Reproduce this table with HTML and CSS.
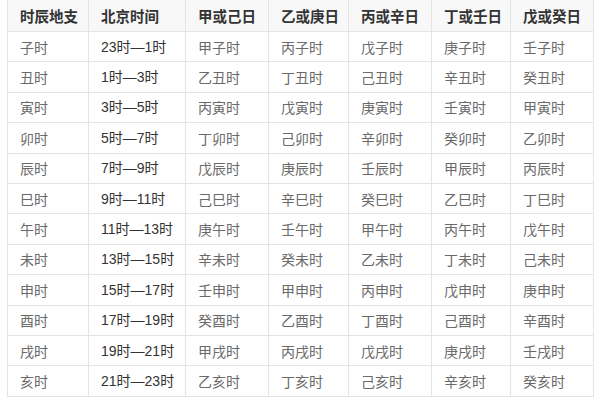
FILE: index.html
```html
<!DOCTYPE html>
<html lang="zh">
<head>
<meta charset="utf-8">
<link rel="stylesheet" href="styles.css">
</head>
<body>
<table class="shichen">
<colgroup>
<col class="c1"><col class="c2"><col class="c3"><col class="c4"><col class="c5"><col class="c6"><col class="c7">
</colgroup>
<thead>
<tr><th>时辰地支</th><th>北京时间</th><th>甲或己日</th><th>乙或庚日</th><th>丙或辛日</th><th>丁或壬日</th><th>戊或癸日</th></tr>
</thead>
<tbody>
<tr><td>子时</td><td class="num">23时—1时</td><td>甲子时</td><td>丙子时</td><td>戊子时</td><td>庚子时</td><td>壬子时</td></tr>
<tr><td>丑时</td><td class="num">1时—3时</td><td>乙丑时</td><td>丁丑时</td><td>己丑时</td><td>辛丑时</td><td>癸丑时</td></tr>
<tr><td>寅时</td><td class="num">3时—5时</td><td>丙寅时</td><td>戊寅时</td><td>庚寅时</td><td>壬寅时</td><td>甲寅时</td></tr>
<tr><td>卯时</td><td class="num">5时—7时</td><td>丁卯时</td><td>己卯时</td><td>辛卯时</td><td>癸卯时</td><td>乙卯时</td></tr>
<tr><td>辰时</td><td class="num">7时—9时</td><td>戊辰时</td><td>庚辰时</td><td>壬辰时</td><td>甲辰时</td><td>丙辰时</td></tr>
<tr><td>巳时</td><td class="num">9时—11时</td><td>己巳时</td><td>辛巳时</td><td>癸巳时</td><td>乙巳时</td><td>丁巳时</td></tr>
<tr><td>午时</td><td class="num">11时—13时</td><td>庚午时</td><td>壬午时</td><td>甲午时</td><td>丙午时</td><td>戊午时</td></tr>
<tr><td>未时</td><td class="num">13时—15时</td><td>辛未时</td><td>癸未时</td><td>乙未时</td><td>丁未时</td><td>己未时</td></tr>
<tr><td>申时</td><td class="num">15时—17时</td><td>壬申时</td><td>甲申时</td><td>丙申时</td><td>戊申时</td><td>庚申时</td></tr>
<tr><td>酉时</td><td class="num">17时—19时</td><td>癸酉时</td><td>乙酉时</td><td>丁酉时</td><td>己酉时</td><td>辛酉时</td></tr>
<tr><td>戌时</td><td class="num">19时—21时</td><td>甲戌时</td><td>丙戌时</td><td>戊戌时</td><td>庚戌时</td><td>壬戌时</td></tr>
<tr><td>亥时</td><td class="num">21时—23时</td><td>乙亥时</td><td>丁亥时</td><td>己亥时</td><td>辛亥时</td><td>癸亥时</td></tr>
</tbody>
</table>
</body>
</html>
```

FILE: styles.css
```css
html, body {
  margin: 0;
  padding: 0;
  background: #ffffff;
}
body {
  padding-left: 7px;
}
.shichen {
  border-collapse: collapse;
  table-layout: fixed;
  width: 586px;
  margin-top: -1px;
  font-family: "Noto Sans CJK SC", sans-serif;
  font-size: 14px;
}
.c1 { width: 81px; }
.c2 { width: 97px; }
.c3 { width: 83px; }
.c4 { width: 80px; }
.c5 { width: 83px; }
.c6 { width: 79px; }
.c7 { width: 83px; }
.shichen th,
.shichen td {
  border: 1px solid #e4e4e4;
  padding: 0 0 0 12px;
  text-align: left;
  white-space: nowrap;
  line-height: 20px;
}
.shichen th {
  height: 32px;
  box-sizing: border-box;
  background: #f8f8f8;
  color: #333333;
  font-weight: 700;
  font-size: 14.5px;
}
.shichen td {
  height: 30.4px;
  box-sizing: border-box;
  color: #6a6a6a;
}
.shichen td.num {
  font-family: "Liberation Sans", "Noto Sans CJK SC", sans-serif;
  color: #333333;
  font-size: 14px;
}
```
